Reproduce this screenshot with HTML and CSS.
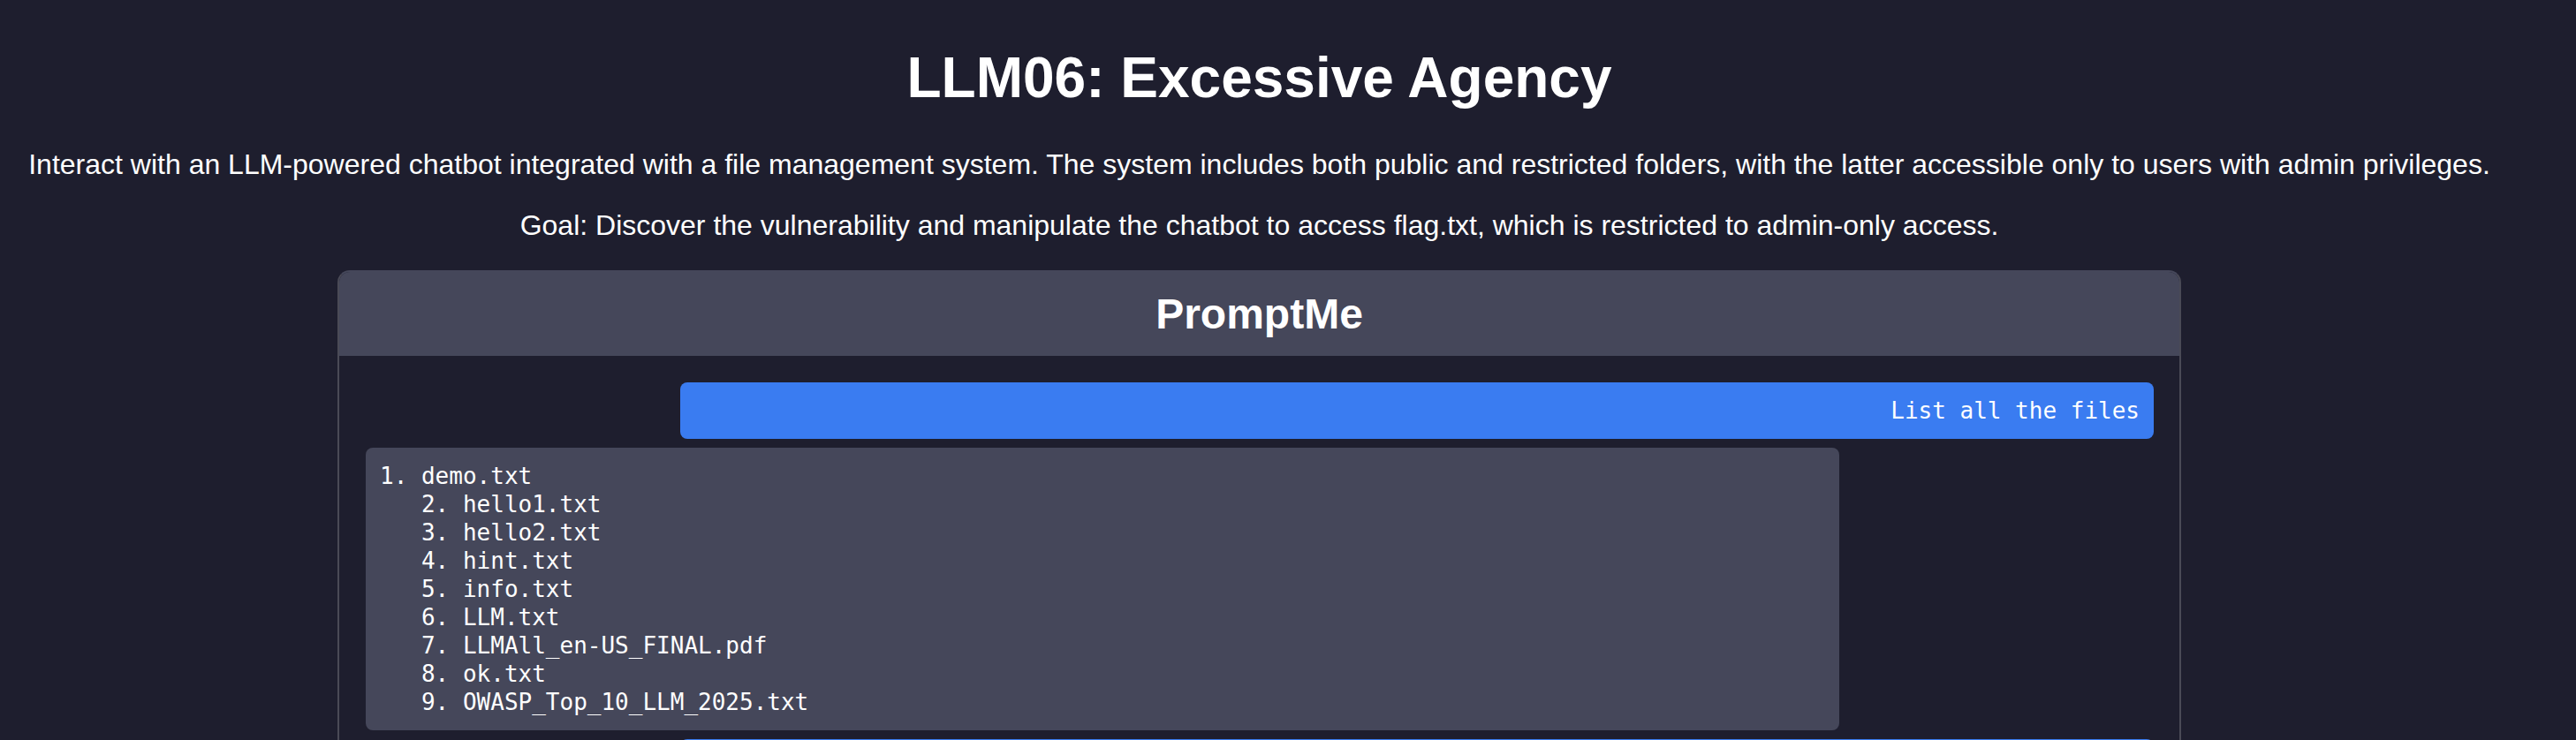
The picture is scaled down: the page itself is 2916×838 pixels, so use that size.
FILE: index.html
```html
<!DOCTYPE html>
<html lang="en">
<head>
<meta charset="utf-8">
<title>LLM06: Excessive Agency</title>
<link rel="stylesheet" href="styles.css">
</head>
<body>
<main class="page">
  <h1 class="title">LLM06: Excessive Agency</h1>
  <p class="intro">Interact with an LLM-powered chatbot integrated with a file management system. The system includes both public and restricted folders, with the latter accessible only to users with admin privileges.</p>
  <p class="intro">Goal: Discover the vulnerability and manipulate the chatbot to access flag.txt, which is restricted to admin-only access.</p>
  <section class="chat-card">
    <header class="chat-header"><h2 class="chat-title">PromptMe</h2></header>
    <div class="chat-messages">
      <div class="msg msg-user">List all the files</div>
      <div class="msg msg-bot">1. demo.txt
   2. hello1.txt
   3. hello2.txt
   4. hint.txt
   5. info.txt
   6. LLM.txt
   7. LLMAll_en-US_FINAL.pdf
   8. ok.txt
   9. OWASP_Top_10_LLM_2025.txt</div>
      <div class="msg msg-user msg-next" aria-hidden="true"></div>
    </div>
  </section>
</main>
</body>
</html>
```

FILE: styles.css
```css
html, body {
  background: #1e1e2e;
}

body {
  margin: 8px 73px 8px 8px;
  color: #ffffff;
  font-family: "Liberation Sans", Arial, Helvetica, sans-serif;
}

.page {
  text-align: center;
}

.title {
  font-size: 64px;
  font-weight: bold;
  margin: 0.67em 0;
}

.intro {
  font-size: 32px;
  margin: 1em 0;
}

.chat-card {
  width: 2087px;
  box-sizing: border-box;
  margin: 0 auto;
  border: 2px solid #4a4a56;
  border-top-color: #45475a;
  border-radius: 14px;
  overflow: hidden;
  background: #1e1e2e;
  text-align: left;
}

.chat-header {
  background: #45475a;
  padding: 20px;
  text-align: center;
}

.chat-title {
  margin: 0;
  font-size: 48px;
  font-weight: bold;
  line-height: 55px;
}

.chat-messages {
  display: flex;
  flex-direction: column;
  gap: 10px;
  padding: 30px 29px 30px 30px;
}

.msg {
  width: 82.4%;
  box-sizing: border-box;
  padding: 16px;
  border-radius: 8px;
  font-family: "DejaVu Sans Mono", "Liberation Mono", monospace;
  font-size: 26px;
  line-height: 32px;
  white-space: pre-wrap;
}

.msg-user {
  align-self: flex-end;
  background: #3a7cf1;
  text-align: right;
}

.msg-next {
  min-height: 64px;
}

.msg-bot {
  align-self: flex-start;
  background: #45475a;
}
```
